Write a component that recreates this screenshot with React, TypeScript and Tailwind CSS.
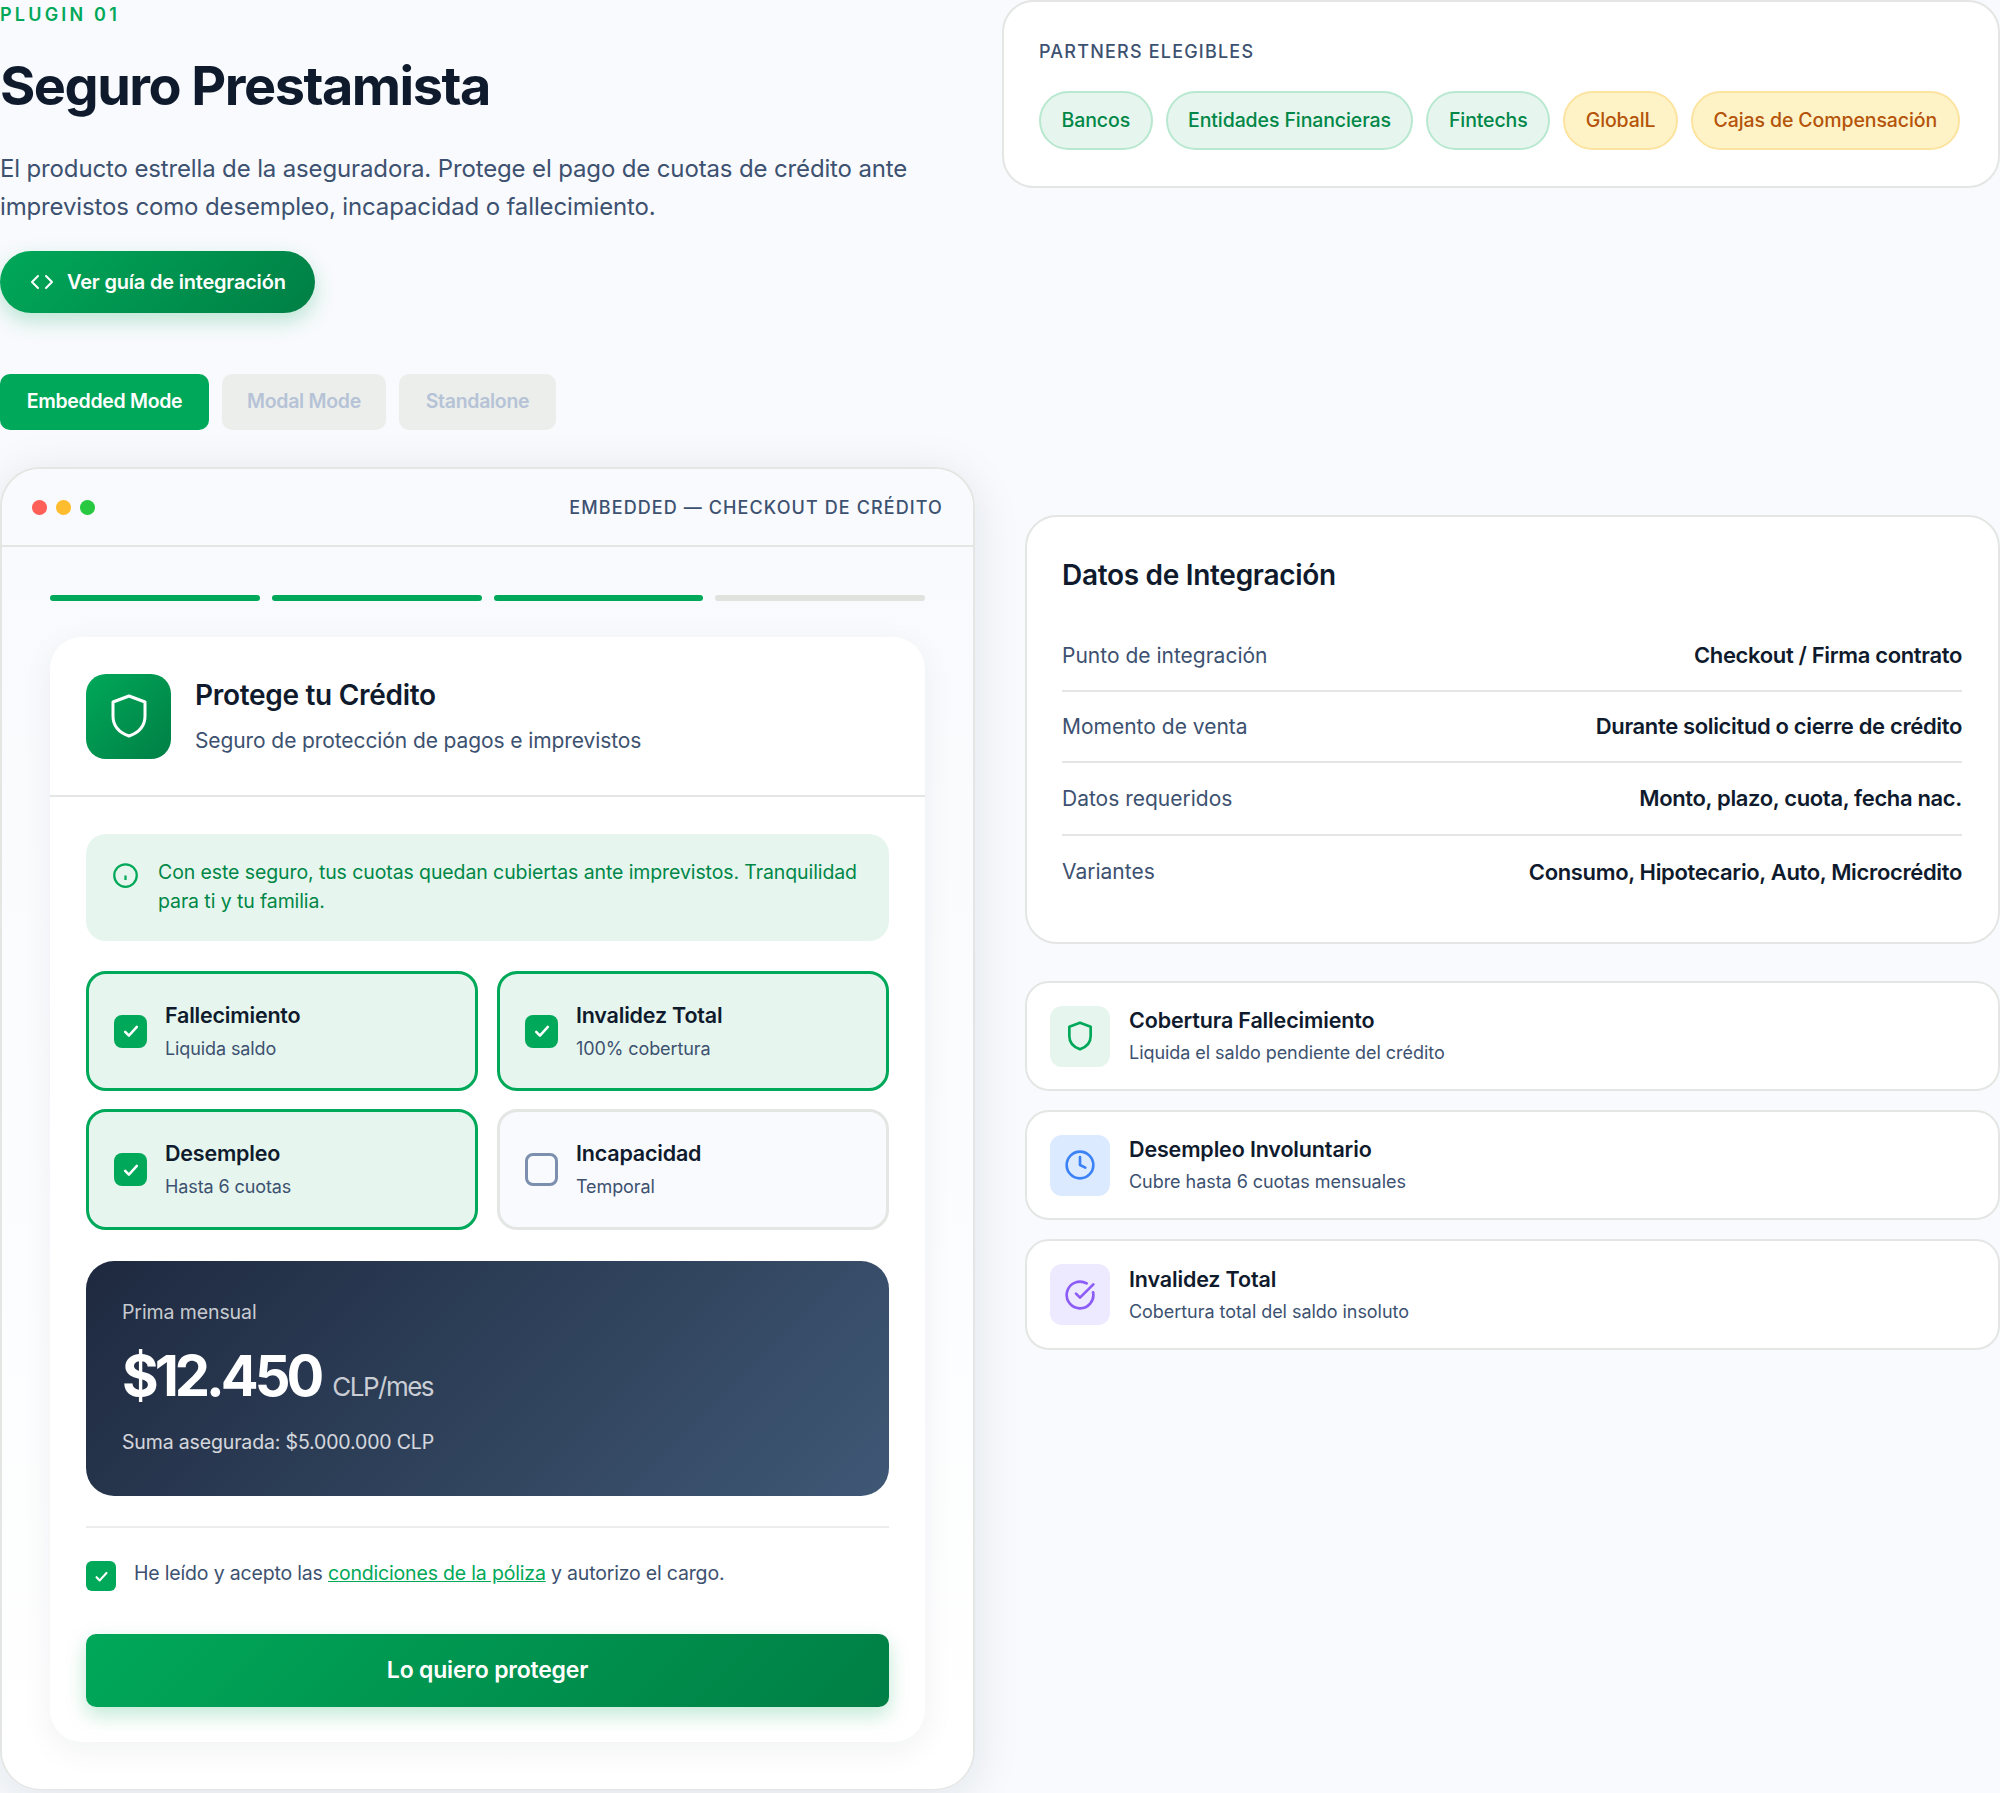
import { ReactNode } from "react";

const partners = [
  { name: "Bancos", tone: "green" },
  { name: "Entidades Financieras", tone: "green" },
  { name: "Fintechs", tone: "green" },
  { name: "GlobalL", tone: "amber" },
  { name: "Cajas de Compensación", tone: "amber" },
];

const datos = [
  { label: "Punto de integración", value: "Checkout / Firma contrato", h: "h-[71px]" },
  { label: "Momento de venta", value: "Durante solicitud o cierre de crédito", h: "h-[71px]" },
  { label: "Datos requeridos", value: "Monto, plazo, cuota, fecha nac.", h: "h-[73px]" },
  { label: "Variantes", value: "Consumo, Hipotecario, Auto, Microcrédito", h: "h-[72px]" },
];

const opciones = [
  { title: "Fallecimiento", sub: "Liquida saldo", on: true },
  { title: "Invalidez Total", sub: "100% cobertura", on: true },
  { title: "Desempleo", sub: "Hasta 6 cuotas", on: true },
  { title: "Incapacidad", sub: "Temporal", on: false },
];

function Shield({ className, stroke = 2 }: { className: string; stroke?: number }) {
  return (
    <svg viewBox="0 0 24 24" fill="none" stroke="currentColor" strokeWidth={stroke} strokeLinejoin="round" className={className}>
      <path d="M12 2 4 5v7c0 5.500 3.400 8.400 8 10 4.600-1.600 8-4.500 8-10V5z" />
    </svg>
  );
}

function Check({ className }: { className: string }) {
  return (
    <svg viewBox="0 0 24 24" fill="none" stroke="currentColor" strokeWidth={3} strokeLinecap="round" strokeLinejoin="round" className={className}>
      <path d="M5 13l4.500 4.500L19 7" />
    </svg>
  );
}

function Feature({ icon, bg, title, sub, h }: { icon: ReactNode; bg: string; title: string; sub: string; h: string }) {
  return (
    <div className={`flex items-center gap-[19px] rounded-[24px] border-2 border-[#e4e6e4] bg-white px-[23px] ${h}`}>
      <div className={`flex h-[61px] w-[60px] items-center justify-center rounded-[12px] ${bg}`}>{icon}</div>
      <div>
        <div className="text-[21.500px] leading-[30px] font-semibold tracking-[-0.150px] text-[#0f1b2d]">{title}</div>
        <div className="mt-[4px] text-[18px] leading-[28px] tracking-[-0.050px] text-[#3d5170]">{sub}</div>
      </div>
    </div>
  );
}

export default function App() {
  return (
    <div className="h-[1793px] overflow-hidden bg-[#f8fafd] font-['Inter',sans-serif]">
      {/* Hero */}
      <div className="grid grid-cols-[954px_998px] gap-[48px]">
        <div>
          <div className="pt-[5px] text-[18px] leading-[20px] font-semibold tracking-[3.200px] text-[#00a859]">PLUGIN 01</div>
          <h1 className="mt-[29px] text-[54px] leading-[64px] font-bold tracking-[-1.500px] text-[#0f1b2d]">Seguro Prestamista</h1>
          <p className="mt-[32px] w-[930px] text-[24px] leading-[38px] tracking-[-0.140px] text-[#3d5170]">
            El producto estrella de la aseguradora. Protege el pago de cuotas de crédito ante imprevistos como desempleo, incapacidad o fallecimiento.
          </p>
          <button className="mt-[25px] flex h-[62px] w-[315px] items-center gap-[13px] rounded-full bg-[linear-gradient(135deg,#00a859,#007f45)] pl-[30px] text-[20px] font-semibold tracking-[-0.200px] text-white shadow-[0_8px_20px_rgba(0,168,89,0.25)]">
            <svg viewBox="0 0 24 24" fill="none" stroke="currentColor" strokeWidth={2} strokeLinecap="round" strokeLinejoin="round" className="h-[24px] w-[24px]">
              <path d="M16 18l6-6-6-6M8 6l-6 6 6 6" />
            </svg>
            Ver guía de integración
          </button>
        </div>
        <div className="h-[188px] rounded-[32px] border-2 border-[#e4e6e4] bg-white pt-[38px] pr-[36px] pl-[35px]">
          <div className="text-[18px] leading-[24px] font-medium tracking-[1.200px] text-[#3d5170]">PARTNERS ELEGIBLES</div>
          <div className="mt-[27px] flex gap-[13px]">
            {partners.map(p => (
              <span
                key={p.name}
                className={
                  p.tone === "green"
                    ? "flex h-[59px] items-center rounded-full border-2 border-[#b9e8d0] bg-[#e6f6ee] px-[20.500px] text-[19.500px] font-medium tracking-[-0.100px] whitespace-nowrap text-[#008747]"
                    : "flex h-[59px] items-center rounded-full border-2 border-[#fde3a0] bg-[#fef3c7] px-[20.500px] text-[19.500px] font-medium tracking-[-0.100px] whitespace-nowrap text-[#b45309]"
                }
              >
                {p.name}
              </span>
            ))}
          </div>
        </div>
      </div>

      {/* Body */}
      <div className="mt-[61px] grid grid-cols-[975px_975px] gap-[50px]">
        <div>
          <div className="flex gap-[13px] text-[19.500px] font-semibold tracking-[-0.300px]">
            <button className="flex h-[56px] w-[209px] items-center justify-center rounded-[10px] bg-[#00a859] text-white">Embedded Mode</button>
            <button className="flex h-[56px] w-[164px] items-center justify-center rounded-[10px] bg-[#eceeec] text-[#b6c3d6]">Modal Mode</button>
            <button className="flex h-[56px] w-[157px] items-center justify-center rounded-[10px] bg-[#eceeec] text-[#b6c3d6]">Standalone</button>
          </div>

          {/* Mock window */}
          <div className="mt-[37px] h-[1323px] rounded-[40px] border-2 border-[#e4e6e4] bg-white shadow-[0_8px_48px_rgba(15,27,45,0.1)]">
            <div className="flex h-[78px] items-center justify-between rounded-t-[38px] border-b-2 border-[#e4e6e4] bg-[#f8fafd] pr-[30px] pl-[30px]">
              <div className="flex gap-[9px]">
                <span className="h-[15px] w-[15px] rounded-full bg-[#ff5f57]" />
                <span className="h-[15px] w-[15px] rounded-full bg-[#febc2e]" />
                <span className="h-[15px] w-[15px] rounded-full bg-[#28c840]" />
              </div>
              <span className="text-[18px] font-medium tracking-[1.100px] text-[#3d5170]">EMBEDDED — CHECKOUT DE CRÉDITO</span>
            </div>
            <div className="h-[1242px] rounded-b-[38px] bg-gradient-to-b from-[#f8fafd] to-white px-[48px] pt-[48px]">
              <div className="flex gap-[12px]">
                <span className="h-[6px] flex-1 rounded-full bg-[#00a859]" />
                <span className="h-[6px] flex-1 rounded-full bg-[#00a859]" />
                <span className="h-[6px] flex-1 rounded-full bg-[#00a859]" />
                <span className="h-[6px] flex-1 rounded-full bg-[#e0e2dd]" />
              </div>

              <div className="mt-[36px] h-[1105px] rounded-[32px] bg-white shadow-[0_8px_32px_rgba(15,27,45,0.06)]">
                <div className="flex h-[160px] items-center gap-[24px] border-b-2 border-[#e4e6e4] px-[36px]">
                  <div className="flex h-[85px] w-[85px] items-center justify-center rounded-[20px] bg-[linear-gradient(135deg,#00a859,#007f45)] text-white">
                    <Shield className="h-[48px] w-[48px]" stroke={1.500} />
                  </div>
                  <div>
                    <div className="text-[28px] leading-[36px] font-semibold tracking-[-0.300px] text-[#0f1b2d]">Protege tu Crédito</div>
                    <div className="mt-[13px] text-[21px] leading-[30px] tracking-[-0.100px] text-[#3d5170]">Seguro de protección de pagos e imprevistos</div>
                  </div>
                </div>

                <div className="px-[36px] pt-[37px]">
                  <div className="flex h-[107px] items-start gap-[19px] rounded-[20px] bg-[#e6f6ee] pt-[24px] pl-[26px]">
                    <svg viewBox="0 0 24 24" fill="none" stroke="currentColor" strokeWidth={2} strokeLinecap="butt" className="mt-[4px] h-[27px] w-[27px] shrink-0 text-[#00a859]">
                      <circle cx="12" cy="12" r="10" />
                      <path d="M12 12v4" />
                    </svg>
                    <p className="w-[710px] text-[19.500px] leading-[29px] tracking-[-0.100px] text-[#008747]">
                      Con este seguro, tus cuotas quedan cubiertas ante imprevistos. Tranquilidad para ti y tu familia.
                    </p>
                  </div>

                  <div className="mt-[30px] grid grid-cols-2 gap-x-[19px] gap-y-[18px]">
                    {opciones.map((o, i) => (
                      <div
                        key={o.title}
                        className={
                          (i < 2 ? "h-[120px] " : "h-[121px] ") +
                          (o.on
                            ? "flex items-center gap-[18px] rounded-[20px] border-[3px] border-[#00a859] bg-[#e6f6ee] pl-[25px]"
                            : "flex items-center gap-[18px] rounded-[20px] border-[3px] border-[#e4e6e4] bg-[#f8fafd] pl-[25px]")
                        }
                      >
                        {o.on ? (
                          <span className="flex h-[33px] w-[33px] items-center justify-center rounded-[8px] bg-[#00a859] text-white">
                            <Check className="h-[20px] w-[20px]" />
                          </span>
                        ) : (
                          <span className="h-[33px] w-[33px] rounded-[8px] border-[3px] border-[#7c8fae]" />
                        )}
                        <div>
                          <div className="text-[21.500px] leading-[30px] font-semibold tracking-[-0.200px] text-[#0f1b2d]">{o.title}</div>
                          <div className="mt-[5px] text-[18px] leading-[28px] tracking-[-0.100px] text-[#3d5170]">{o.sub}</div>
                        </div>
                      </div>
                    ))}
                  </div>

                  <div className="mt-[31px] h-[235px] rounded-[28px] bg-[linear-gradient(135deg,#1e293f,#3f5875)] px-[36px] pt-[37px]">
                    <div className="text-[19.500px] leading-[28px] tracking-[-0.100px] text-white/75">Prima mensual</div>
                    <div className="mt-[16px] flex items-baseline gap-[12px] leading-[68px]">
                      <span className="text-[56px] font-bold tracking-[-4px] text-white">$12.450</span>
                      <span className="text-[26px] tracking-[-1.500px] text-white/75">CLP/mes</span>
                    </div>
                    <div className="mt-[7px] text-[19.500px] leading-[28px] tracking-[-0.150px] text-white/80">Suma asegurada: $5.000.000 CLP</div>
                  </div>

                  <div className="mt-[30px] border-t-2 border-[#ecedeb] pt-[33px]">
                    <div className="flex items-start gap-[18px]">
                      <span className="flex h-[30px] w-[30px] shrink-0 items-center justify-center rounded-[6px] bg-[#00a859] text-white">
                        <Check className="h-[17px] w-[17px]" />
                      </span>
                      <p className="text-[19.500px] leading-[24px] tracking-[-0.180px] text-[#3d5170]">
                        He leído y acepto las <a className="text-[#00a859] underline">condiciones de la póliza</a> y autorizo el cargo.
                      </p>
                    </div>
                    <button className="mt-[43px] h-[73px] w-full rounded-[10px] bg-[linear-gradient(135deg,#00a859,#007f45)] text-[23px] font-semibold tracking-[-0.200px] text-white shadow-[0_8px_20px_rgba(0,168,89,0.25)]">
                      Lo quiero proteger
                    </button>
                  </div>
                </div>
              </div>
            </div>
          </div>
        </div>

        {/* Side column */}
        <div className="pt-[141px]">
          <div className="h-[429px] rounded-[32px] border-2 border-[#e4e6e4] bg-white pt-[40px] pr-[36px] pl-[35px]">
            <h3 className="text-[28px] leading-[36px] font-semibold tracking-[-0.300px] text-[#0f1b2d]">Datos de Integración</h3>
            <div className="mt-[28px]">
              {datos.map((d, i) => (
                <div key={d.label} className={`flex items-center justify-between ${d.h} ${i < 3 ? "border-b-2 border-[#e4e6e4]" : ""}`}>
                  <span className="text-[21px] tracking-[0px] text-[#3d5170]">{d.label}</span>
                  <span className="text-[22px] font-semibold tracking-[-0.350px] text-[#0f1b2d]">{d.value}</span>
                </div>
              ))}
            </div>
          </div>

          <div className="mt-[37px] flex flex-col gap-[19px]">
            <Feature h="h-[110px]" bg="bg-[#e6f6ee]" title="Cobertura Fallecimiento" sub="Liquida el saldo pendiente del crédito" icon={<Shield className="h-[32px] w-[32px] text-[#00a859]" />} />
            <Feature
              h="h-[110px]"
              bg="bg-[#dbeafe]"
              title="Desempleo Involuntario"
              sub="Cubre hasta 6 cuotas mensuales"
              icon={
                <svg viewBox="0 0 24 24" fill="none" stroke="currentColor" strokeWidth={2} strokeLinecap="round" strokeLinejoin="round" className="h-[32px] w-[32px] text-[#3b82f6]">
                  <circle cx="12" cy="12" r="10" />
                  <path d="M12 6v6l4 2" />
                </svg>
              }
            />
            <Feature
              h="h-[111px]"
              bg="bg-[#ede9fe]"
              title="Invalidez Total"
              sub="Cobertura total del saldo insoluto"
              icon={
                <svg viewBox="0 0 24 24" fill="none" stroke="currentColor" strokeWidth={2} strokeLinecap="round" strokeLinejoin="round" className="h-[32px] w-[32px] text-[#8b5cf6]">
                  <path d="M21.800 10A10 10 0 1 1 17 3.340" />
                  <path d="m9 11 3 3L22 4" />
                </svg>
              }
            />
          </div>
        </div>
      </div>
    </div>
  );
}
